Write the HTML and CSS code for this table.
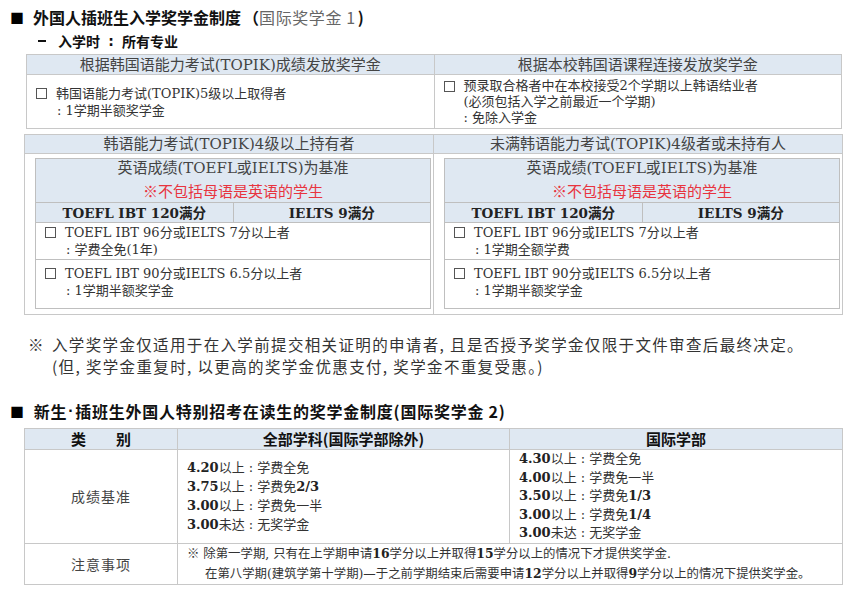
FILE: index.html
```html
<!DOCTYPE html>
<html lang="zh-CN">
<head>
<meta charset="utf-8">
<title>奖学金制度</title>
<link rel="stylesheet" href="styles.css">
</head>
<body>
<div class="page">
  <h1 class="title"><span class="sq">■</span>外国人插班生入学奖学金制度<span class="paren">（</span><span class="title-sub">国际奖学金 1</span>)</h1>
  <h2 class="subtitle"><span class="dash"></span>入学时<span class="colon">:</span>所有专业</h2>

  <table class="grid t1">
    <tr>
      <th class="hd">根据韩国语能力考试(TOPIK)成绩发放奖学金</th>
      <th class="hd">根据本校韩国语课程连接发放奖学金</th>
    </tr>
    <tr class="t1-body">
      <td class="item-cell">
        <div class="item"><span class="box"></span><div class="lines"><div>韩国语能力考试(TOPIK)5级以上取得者</div><div class="sub">: 1学期半额奖学金</div></div></div>
      </td>
      <td class="item-cell right">
        <div class="item tight"><span class="box"></span><div class="lines"><div>预录取合格者中在本校接受2个学期以上韩语结业者</div><div>(必须包括入学之前最近一个学期)</div><div>: 免除入学金</div></div></div>
      </td>
    </tr>
  </table>

  <table class="grid t2">
    <tr>
      <th class="hd hd2">韩语能力考试(TOPIK)4级以上持有者</th>
      <th class="hd hd2">未满韩语能力考试(TOPIK)4级者或未持有人</th>
    </tr>
    <tr>
      <td class="wrap">
        <table class="grid inner">
          <tr><th colspan="2" class="hd inner-hd"><div class="l1">英语成绩(TOEFL或IELTS)为基准</div><div class="l2 red">※不包括母语是英语的学生</div></th></tr>
          <tr><th class="hd sc">TOEFL IBT 120满分</th><th class="hd sc">IELTS 9满分</th></tr>
          <tr class="r1"><td colspan="2" class="ic"><div class="item"><span class="box"></span><div class="lines"><div>TOEFL IBT 96分或IELTS 7分以上者</div><div class="sub">: 学费全免(1年)</div></div></div></td></tr>
          <tr class="r2"><td colspan="2" class="ic"><div class="item"><span class="box"></span><div class="lines"><div>TOEFL IBT 90分或IELTS 6.5分以上者</div><div class="sub">: 1学期半额奖学金</div></div></div></td></tr>
        </table>
      </td>
      <td class="wrap">
        <table class="grid inner">
          <tr><th colspan="2" class="hd inner-hd"><div class="l1">英语成绩(TOEFL或IELTS)为基准</div><div class="l2 red">※不包括母语是英语的学生</div></th></tr>
          <tr><th class="hd sc">TOEFL IBT 120满分</th><th class="hd sc">IELTS 9满分</th></tr>
          <tr class="r1"><td colspan="2" class="ic"><div class="item"><span class="box"></span><div class="lines"><div>TOEFL IBT 96分或IELTS 7分以上者</div><div class="sub">: 1学期全额学费</div></div></div></td></tr>
          <tr class="r2"><td colspan="2" class="ic"><div class="item"><span class="box"></span><div class="lines"><div>TOEFL IBT 90分或IELTS 6.5分以上者</div><div class="sub">: 1学期半额奖学金</div></div></div></td></tr>
        </table>
      </td>
    </tr>
  </table>

  <div class="note">
    <div><span class="mark">※</span>入学奖学金仅适用于在入学前提交相关证明的申请者, 且是否授予奖学金仅限于文件审查后最终决定。</div>
    <div class="indent">(但, 奖学金重复时, 以更高的奖学金优惠支付, 奖学金不重复受惠。)</div>
  </div>

  <h1 class="title title2"><span class="sq">■</span>新生<span class="dot">·</span>插班生外国人特别招考在读生的奖学金制度(国际奖学金 2)</h1>

  <table class="grid t3">
    <colgroup><col class="c1"><col class="c2"><col class="c3"></colgroup>
    <tr class="t3-hd">
      <th class="hd b">类　　别</th>
      <th class="hd b">全部学科(国际学部除外)</th>
      <th class="hd b">国际学部</th>
    </tr>
    <tr class="t3-r1">
      <td class="label">成绩基准</td>
      <td class="list">
        <div><span class="num">4.20</span>以上 : 学费全免</div>
        <div><span class="num">3.75</span>以上 : 学费免<span class="num">2/3</span></div>
        <div><span class="num">3.00</span>以上 : 学费免一半</div>
        <div><span class="num">3.00</span>未达 : 无奖学金</div>
      </td>
      <td class="list list5">
        <div><span class="num">4.30</span>以上 : 学费全免</div>
        <div><span class="num">4.00</span>以上 : 学费免一半</div>
        <div><span class="num">3.50</span>以上 : 学费免<span class="num">1/3</span></div>
        <div><span class="num">3.00</span>以上 : 学费免<span class="num">1/4</span></div>
        <div><span class="num">3.00</span>未达 : 无奖学金</div>
      </td>
    </tr>
    <tr class="t3-r2">
      <td class="label">注意事项</td>
      <td colspan="2" class="notes">
        <div>※ 除第一学期, 只有在上学期申请<span class="num">16</span>学分以上并取得<span class="num">15</span>学分以上的情况下才提供奖学金.</div>
        <div class="indent2">在第八学期(建筑学第十学期)—于之前学期结束后需要申请<span class="num">12</span>学分以上并取得<span class="num">9</span>学分以上的情况下提供奖学金。</div>
      </td>
    </tr>
  </table>
</div>
</body>
</html>
```

FILE: styles.css
```css
* { box-sizing: border-box; }
html, body { margin: 0; padding: 0; background: #fff; }
body {
  width: 852px;
  font-family: "DejaVu Serif", "Noto Sans CJK SC", serif;
  color: #333;
  font-size: 13px;
}
.page { padding-top: 7px; }

.title {
  margin: 0;
  font-family: "Noto Sans CJK SC", sans-serif;
  font-size: 16px;
  font-weight: 700;
  line-height: 20px;
  color: #111;
  padding-left: 10px;
  display: flex;
  align-items: center;
  white-space: nowrap;
}
.sq { font-size: 14px; margin-right: 9px; color: #000; }
.paren { margin-left: 2px; }
.title-sub { font-weight: 400; color: #666; letter-spacing: 0.6px; margin-right: 2px; }

.subtitle {
  margin: 4px 0 0 0;
  font-family: "Noto Sans CJK SC", sans-serif;
  font-size: 14px;
  font-weight: 700;
  line-height: 20px;
  color: #111;
  padding-left: 38px;
  display: flex;
  align-items: center;
}
.dash { display: inline-block; width: 8px; height: 2px; background: #111; margin-right: 12px; }
.colon { display: inline-block; width: 22px; text-align: center; font-family: "DejaVu Sans", sans-serif; }

.grid { border-collapse: collapse; table-layout: fixed; }
.grid th, .grid td { border: 1px solid #c8c8c8; padding: 0; }
.hd {
  background: #dfe8f2;
  font-weight: 400;
  color: #444;
  font-size: 15px;
  text-align: center;
  line-height: 18px;
}

.t1 { margin: 3px 0 0 26px; width: 816px; }
.t1 th { height: 20px; }
.t1-body td { height: 54px; }
.item-cell { padding-left: 9px !important; vertical-align: middle; }

.item { display: flex; align-items: flex-start; line-height: 17px; color: #333; }
.item.tight { line-height: 16px; }
.box {
  flex: none;
  width: 11px; height: 11px;
  border: 1px solid #555;
  margin-top: 3px;
  margin-right: 9px;
  background: #fff;
}
.lines .sub { padding-left: 1px; }

.t2 { margin: 5px 0 0 24px; width: 818px; }
.t2 > tbody > tr > th { height: 19px; }
.t2 .hd2 { width: 409px; }
.wrap { vertical-align: top; padding: 4px 2px 5px 10px !important; }
.inner { width: 100%; }
.inner th, .inner td { border-color: #bfbfbf; }
.inner-hd { height: 44px; padding: 0 !important; vertical-align: top; }
.inner-hd .l1 { line-height: 18px; }
.inner-hd .l2 { line-height: 19px; margin-top: 6px; }
.red { color: #e8343f; }
.sc { height: 20px; font-weight: 700; color: #222; font-size: 13.5px; }
.r1 td { height: 37px; }
.r2 td { height: 49px; padding-bottom: 4px !important; }
.ic { padding-left: 9px !important; vertical-align: middle; }

.note {
  margin: 18px 0 0 28px;
  font-family: "Noto Sans CJK SC", sans-serif;
  font-size: 15.5px;
  line-height: 22px;
  color: #333;
  letter-spacing: 1.35px;
  white-space: nowrap;
}
.mark { display: inline-block; width: 24px; letter-spacing: 0; }
.indent { padding-left: 24px; }

.title2 { margin-top: 24px; font-size: 16px; letter-spacing: 0.75px; }
.dot { font-family: "Liberation Sans", sans-serif; margin: 0 1px; }

.t3 { margin: 7px 0 0 24px; width: 818px; }
.c1 { width: 153px; }
.c2 { width: 332px; }
.c3 { width: 333px; }
.t3 .b { font-family: "Noto Sans CJK SC", sans-serif; font-weight: 700; color: #111; font-size: 15px; height: 21px; }
.t3-r1 td { height: 93px; }
.t3-r2 td { height: 37px; }
.label {
  text-align: center;
  vertical-align: middle;
  font-family: "Noto Sans CJK SC", sans-serif;
  font-size: 14px;
  color: #444;
  letter-spacing: 1px;
}
.list { padding-left: 9px !important; line-height: 19px; vertical-align: middle; font-size: 13px; }
.list5 { line-height: 18.5px; }
.num { font-weight: 700; color: #222; }
.notes { padding-left: 9px !important; line-height: 20px; font-size: 12.4px; vertical-align: middle; white-space: nowrap; }
.indent2 { padding-left: 18px; }
```
